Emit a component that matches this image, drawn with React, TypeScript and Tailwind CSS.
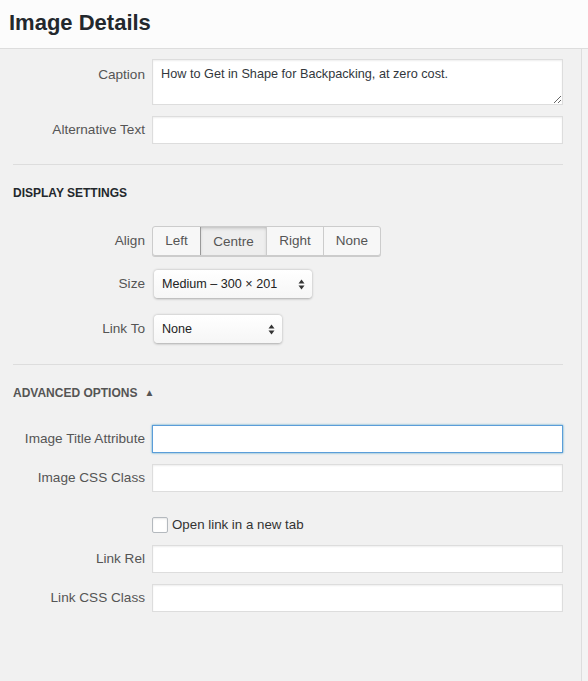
import { useState } from 'react'

function Field({ label, children, top = false }: { label: string; children: React.ReactNode; top?: boolean }) {
    return (
        <div className={top ? 'flex items-start' : 'flex items-center'}>
            <div className={`w-[145px] shrink-0 text-right text-[13.6px] text-[#555] ${top ? 'pt-[6px]' : ''}`}>{label}</div>
            <div className="ml-[7px]">{children}</div>
        </div>
    )
}

function TextInput({ focused = false }: { focused?: boolean }) {
    return (
        <input
            type="text"
            className={
                focused
                    ? 'block w-[411px] h-[28px] bg-white border border-[#5b9dd9] shadow-[0_0_2px_rgba(30,140,190,0.8)] outline-none px-2 text-[13px]'
                    : 'block w-[411px] h-[28px] bg-white border border-[#ddd] shadow-[inset_0_1px_2px_rgba(0,0,0,0.07)] outline-none px-2 text-[13px]'
            }
        />
    )
}

function Arrows() {
    return (
        <svg width="7" height="11" viewBox="0 0 7 11" className="shrink-0">
            <path d="M3.5 0.5 L6.5 4.5 L0.5 4.5 Z" fill="#333" />
            <path d="M3.5 10.5 L6.5 6.5 L0.5 6.5 Z" fill="#333" />
        </svg>
    )
}

function FakeSelect({ value, width }: { value: string; width: string }) {
    return (
        <div
            className={`${width} h-[28px] rounded-[4px] bg-gradient-to-b from-white to-[#f6f6f6] shadow-[0_0.5px_2.5px_rgba(0,0,0,0.3)] flex items-center justify-between pl-[8px] pr-[7px] text-[12.6px] text-[#222]`}
        >
            <span>{value}</span>
            <Arrows />
        </div>
    )
}

export default function App() {
    const [align, setAlign] = useState('Centre')
    const [newTab, setNewTab] = useState(false)

    return (
        <div className="w-[588px] h-[681px] bg-[#f1f1f1] flex flex-col overflow-hidden font-['Liberation_Sans',Arial,sans-serif]">
            <div className="h-[49px] shrink-0 bg-[#fcfcfc] border-b border-[#ddd] flex items-center px-[9px]">
                <h1 className="text-[22px] font-bold text-[#23282d] leading-none -mt-[2px]">Image Details</h1>
            </div>

            <div className="flex flex-1">
                <div className="w-[582px] shrink-0 border-r border-[#ddd] flex flex-col pt-[10px]">
                    <Field label="Caption" top>
                        <textarea
                            className="block w-[411px] h-[46px] bg-white border border-[#ddd] shadow-[inset_0_1px_2px_rgba(0,0,0,0.07)] outline-none px-[8px] py-[6px] text-[12.7px] text-[#32373c] leading-[16px]"
                            defaultValue="How to Get in Shape for Backpacking, at zero cost."
                        />
                    </Field>

                    <div className="mt-[11px]">
                        <Field label="Alternative Text">
                            <TextInput />
                        </Field>
                    </div>

                    <div className="mt-[20px] ml-[13px] w-[550px] h-px bg-[#ddd]" />

                    <h2 className="mt-[21px] ml-[13px] text-[12px] leading-[14px] font-bold text-[#23282d] uppercase">
                        Display Settings
                    </h2>

                    <div className="mt-[26px]">
                        <Field label="Align">
                            <div className="flex h-[30px] rounded-[3px] border border-[#ccc] bg-[#f7f7f7] shadow-[0_1px_0_#ccc] text-[13.5px] text-[#555] overflow-hidden">
                                {['Left', 'Centre', 'Right', 'None'].map((a, i) => (
                                    <button
                                        key={a}
                                        onClick={() => setAlign(a)}
                                        className={
                                            (i > 0 ? 'border-l ' : '') +
                                            (a === 'Left' ? 'w-[47px] ' : a === 'Centre' ? 'w-[66px] ' : 'w-[57px] ') +
                                            (align === a
                                                ? 'border-[#999] bg-[#eee] shadow-[inset_0_2px_5px_-3px_rgba(0,0,0,0.5)] pt-[2px] '
                                                : 'border-[#ccc] ') +
                                            'h-full flex items-center justify-center'
                                        }
                                    >
                                        {a}
                                    </button>
                                ))}
                            </div>
                        </Field>
                    </div>

                    <div className="mt-[14px]">
                        <Field label="Size">
                            <div className="ml-[2px]">
                                <FakeSelect value="Medium – 300 × 201" width="w-[158px]" />
                            </div>
                        </Field>
                    </div>

                    <div className="mt-[17px]">
                        <Field label="Link To">
                            <div className="ml-[2px]">
                                <FakeSelect value="None" width="w-[128px]" />
                            </div>
                        </Field>
                    </div>

                    <div className="mt-[21px] ml-[13px] w-[550px] h-px bg-[#ddd]" />

                    <h2 className="mt-[21px] ml-[13px] text-[12px] leading-[14px] font-bold text-[#555] uppercase flex items-center">
                        Advanced Options
                        <span className="ml-[7px] text-[10px]">▲</span>
                    </h2>

                    <div className="mt-[25px]">
                        <Field label="Image Title Attribute">
                            <TextInput focused />
                        </Field>
                    </div>

                    <div className="mt-[11px]">
                        <Field label="Image CSS Class">
                            <TextInput />
                        </Field>
                    </div>

                    <label className="mt-[25px] ml-[152px] flex items-center gap-[4px] text-[13.3px] text-[#333] h-[16px] cursor-pointer">
                        <span
                            onClick={() => setNewTab(!newTab)}
                            className="w-[16px] h-[16px] bg-white border border-[#b4b9be] rounded-[2px] shadow-[inset_0_1px_2px_rgba(0,0,0,0.1)] flex items-center justify-center text-[11px] text-[#1e8cbe]"
                        >
                            {newTab ? '✓' : ''}
                        </span>
                        Open link in a new tab
                    </label>

                    <div className="mt-[12px]">
                        <Field label="Link Rel">
                            <TextInput />
                        </Field>
                    </div>

                    <div className="mt-[11px]">
                        <Field label="Link CSS Class">
                            <TextInput />
                        </Field>
                    </div>
                </div>
                <div className="flex-1 bg-[#f3f3f3]" />
            </div>
        </div>
    )
}
